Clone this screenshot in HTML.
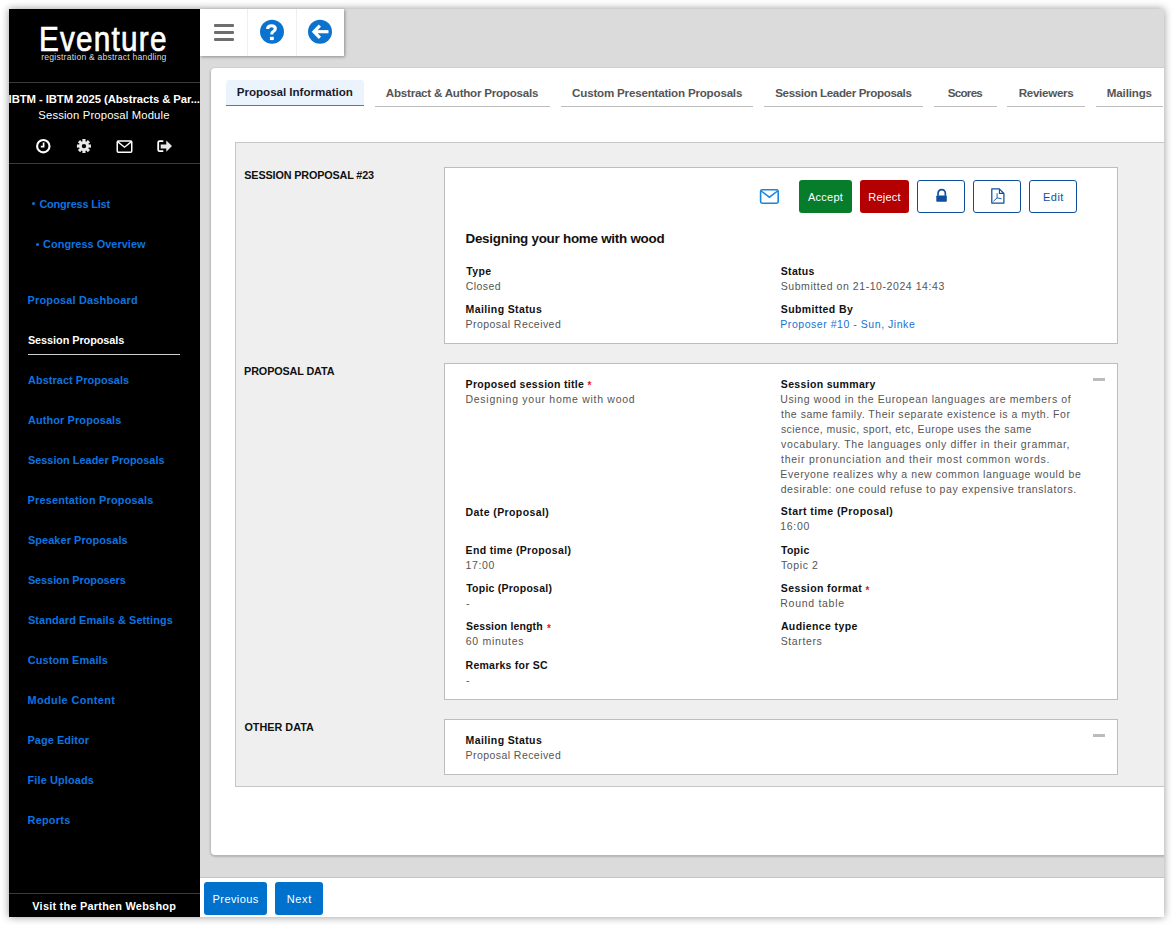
<!DOCTYPE html>
<html><head><meta charset="utf-8">
<style>
html,body{margin:0;padding:0;background:#fff;width:1172px;height:925px;overflow:hidden;font-family:"Liberation Sans",sans-serif}
.a{position:absolute}
.t{position:absolute;white-space:nowrap;font-family:"Liberation Sans",sans-serif}
#shadow{position:absolute;left:9px;top:9px;width:1155px;height:908px;box-shadow:0 0 8px 0 rgba(0,0,0,.42)}
#clip{position:absolute;left:0;top:0;width:1164px;height:917px;overflow:hidden}
.ul{position:absolute;height:1px;background:#bdbdbd;top:106px}
.obtn{position:absolute;top:180px;width:48px;height:33px;box-sizing:border-box;border:1.5px solid #0f4f9a;border-radius:3px;background:#fff}
.box{position:absolute;left:444px;width:674px;box-sizing:border-box;border:1px solid #bdbdbd;background:#fff}
.dash{position:absolute;left:1093px;width:12px;height:3px;background:#bcbcbc}
.ast{position:absolute;color:#e4161b;font:bold 10px/10px "Liberation Sans",sans-serif}
</style></head><body>
<div id="shadow"></div>
<div id="clip">
  <!-- sidebar -->
  <div class="a" style="left:9px;top:9px;width:191px;height:908px;background:#000"></div>
  <div class="a" style="left:9px;top:82px;width:191px;height:1px;background:#3a3a3a"></div>
  <div class="a" style="left:9px;top:163px;width:191px;height:1px;background:#3a3a3a"></div>
  <div class="a" style="left:9px;top:893px;width:191px;height:1px;background:#3a3a3a"></div>
  <div class="a" style="left:28px;top:354px;width:152px;height:1px;background:#cfcfcf"></div>
  <div class="a" style="left:32px;top:202.3px;width:3px;height:3px;border-radius:50%;background:#0c74e0"></div>
  <div class="a" style="left:36.1px;top:242.5px;width:3px;height:3px;border-radius:50%;background:#0c74e0"></div>
  
  <!-- sidebar icons -->
  <svg class="a" style="left:35px;top:138px" width="17" height="17" viewBox="0 0 17 17">
    <circle cx="8.3" cy="8.15" r="6.2" fill="none" stroke="#fff" stroke-width="2.1"/>
    <path d="M8.6 4.4V8.7H5.8" fill="none" stroke="#fff" stroke-width="1.7"/>
  </svg>
  <svg class="a" style="left:76px;top:138px" width="16" height="16" viewBox="0 0 16 16">
    <path fill="#e8e8e8" fill-rule="evenodd" d="M12.73 6.62 L14.96 6.46 L14.96 9.74 L12.73 9.58 L12.37 10.43 L14.07 11.90 L11.75 14.22 L10.28 12.52 L9.43 12.88 L9.59 15.11 L6.31 15.11 L6.47 12.88 L5.62 12.52 L4.15 14.22 L1.83 11.90 L3.53 10.43 L3.17 9.58 L0.94 9.74 L0.94 6.46 L3.17 6.62 L3.53 5.77 L1.83 4.30 L4.15 1.98 L5.62 3.68 L6.47 3.32 L6.31 1.09 L9.59 1.09 L9.43 3.32 L10.28 3.68 L11.75 1.98 L14.07 4.30 L12.37 5.77ZM10.15 8.1 A2.2 2.2 0 1 0 5.75 8.1 A2.2 2.2 0 1 0 10.15 8.1Z"/>
  </svg>
  <svg class="a" style="left:115px;top:139px" width="19" height="16" viewBox="0 0 19 16">
    <rect x="2.25" y="1.95" width="14.5" height="11.2" rx="1.1" fill="none" stroke="#fff" stroke-width="1.5"/>
    <path d="M2.6 2.6L9.5 8.2L16.4 2.6" fill="none" stroke="#fff" stroke-width="1.4"/>
  </svg>
  <svg class="a" style="left:156px;top:138px" width="17" height="16" viewBox="0 0 17 16">
    <path d="M7.3 3.1H3.6Q2.2 3.1 2.2 4.5V11.7Q2.2 13.1 3.6 13.1H7.3" fill="none" stroke="#fff" stroke-width="1.8"/>
    <path fill="#e8e8e8" d="M4.7 6.4H10.3V2.5L16 8.1L10.3 13.7V10.4H4.7Z"/>
  </svg>

  <!-- main -->
  <div class="a" style="left:200px;top:9px;width:964px;height:868px;background:#dbdbdb"></div>
  <div class="a" style="left:200px;top:877px;width:964px;height:1px;background:#c4c4c4"></div>
  <div class="a" style="left:200px;top:878px;width:964px;height:39px;background:#fff"></div>
  <div class="a" style="left:204px;top:882px;width:63px;height:33px;background:#0072ce;border-radius:3px"></div>
  <div class="a" style="left:275px;top:882px;width:48px;height:33px;background:#0072ce;border-radius:3px"></div>

  <!-- toolbar -->
  <div class="a" style="left:200px;top:9px;width:144px;height:47px;background:#fff;box-shadow:1px 1px 3px rgba(0,0,0,.35)"></div>
  <div class="a" style="left:247px;top:9px;width:1px;height:47px;background:#efefef"></div>
  <div class="a" style="left:296px;top:9px;width:1px;height:47px;background:#efefef"></div>
  <div class="a" style="left:214px;top:24px;width:20px;height:3px;background:#6e6e6e;border-radius:1px"></div>
  <div class="a" style="left:214px;top:31px;width:20px;height:3px;background:#6e6e6e;border-radius:1px"></div>
  <div class="a" style="left:214px;top:38px;width:20px;height:3px;background:#6e6e6e;border-radius:1px"></div>
  <svg class="a" style="left:259px;top:19px" width="26" height="26" viewBox="0 0 26 26">
    <circle cx="13" cy="12.7" r="12" fill="#0a72cf"/>
    <path d="M8.6 10.1Q8.6 6.7 12.5 6.7Q16.3 6.7 16.3 9.8Q16.3 11.7 14.2 12.7Q12.8 13.4 12.8 14.7V15.6" fill="none" stroke="#fff" stroke-width="3.1"/>
    <rect x="10.9" y="17.8" width="3.9" height="3.3" fill="#fff"/>
  </svg>
  <svg class="a" style="left:307px;top:19px" width="26" height="26" viewBox="0 0 26 26">
    <circle cx="13" cy="12.7" r="12" fill="#0a72cf"/>
    <path d="M12.9 6.6L7 12.7L12.9 18.8" fill="none" stroke="#fff" stroke-width="3.2" stroke-linejoin="miter" stroke-miterlimit="3"/>
    <path d="M8 12.7H21.5" fill="none" stroke="#fff" stroke-width="3.2"/>
  </svg>

  <!-- card -->
  <div class="a" style="left:211px;top:68px;width:1000px;height:787px;background:#fff;border-radius:4px;box-shadow:0 1px 2px 1px rgba(0,0,0,.18)"></div>
  <div class="a" style="left:226px;top:80px;width:138px;height:25px;background:#ebf4fc;border-radius:3px 3px 0 0"></div>
  <div class="a" style="left:226px;top:105px;width:138px;height:1px;background:#1e88e5"></div>
  <div class="ul" style="left:375px;width:175px"></div>
  <div class="ul" style="left:561px;width:192px"></div>
  <div class="ul" style="left:764px;width:159px"></div>
  <div class="ul" style="left:934px;width:63px"></div>
  <div class="ul" style="left:1007px;width:78px"></div>
  <div class="ul" style="left:1096px;width:67px"></div>

  <!-- panel -->
  <div class="a" style="left:235px;top:142px;width:1000px;height:645px;box-sizing:border-box;border:1px solid #c6c6c6;background:#efefef"></div>
  <div class="box" style="top:167px;height:177px"></div>
  <div class="box" style="top:363px;height:337px"></div>
  <div class="box" style="top:719px;height:56px"></div>
  <div class="dash" style="top:378px"></div>
  <div class="dash" style="top:734px"></div>

  <!-- buttons -->
  <svg class="a" style="left:759px;top:188px" width="21" height="17" viewBox="0 0 21 17">
    <rect x="1.6" y="1.8" width="17.6" height="13.4" rx="1.6" fill="none" stroke="#1a84e0" stroke-width="1.6"/>
    <path d="M2.2 3L10.4 9.2L18.6 3" fill="none" stroke="#1a84e0" stroke-width="1.5"/>
  </svg>
  <div class="a" style="left:799px;top:180px;width:53px;height:33px;background:#077d2c;border-radius:3px"></div>
  <div class="a" style="left:860px;top:180px;width:49px;height:33px;background:#b40000;border-radius:3px"></div>
  <div class="obtn" style="left:917px"></div>
  <div class="obtn" style="left:973px"></div>
  <div class="obtn" style="left:1029px"></div>
  <svg class="a" style="left:935px;top:188px" width="13" height="15" viewBox="0 0 13 15">
    <path d="M3.05 7.8V5.2A3.65 3.65 0 0 1 10.35 5.2V7.8" fill="none" stroke="#0d4f9c" stroke-width="1.7"/>
    <rect x="1.3" y="7.4" width="10.5" height="6.4" rx="0.8" fill="#0d4f9c"/>
  </svg>
  <svg class="a" style="left:990px;top:187px" width="16" height="18" viewBox="0 0 16 18">
    <path d="M1.8 1.9H9.3L13.9 6.5V16H1.8Z" fill="none" stroke="#0d4f9c" stroke-width="1.25" stroke-linejoin="round"/>
    <path d="M9.4 2V6.4H13.8" fill="none" stroke="#0d4f9c" stroke-width="1.1"/>
    <path d="M7.1 6.2V10.9L3.4 14.3M7.1 10.9L11.6 11.8" fill="none" stroke="#0d4f9c" stroke-width="0.9"/>
  </svg>
  <div class="ast" style="left:587.5px;top:380.5px">*</div>
  <div class="ast" style="left:547px;top:624px">*</div>
  <div class="ast" style="left:865.5px;top:585.5px">*</div>

<div class=t style="left:39.48px;top:22px;font-size:34.5px;line-height:34.5px;font-weight:normal;color:#fff;letter-spacing:1.440px;-webkit-text-stroke:0.7px #fff;transform:scaleX(0.86);transform-origin:0 0;">Eventure</div>
<div class=t style="left:41.30px;top:53px;font-size:8.6px;line-height:8.6px;font-weight:normal;color:#d8d8d8;letter-spacing:0.214px;">registration &amp; abstract handling</div>
<div class=t style="left:8.60px;top:94px;font-size:11.3px;line-height:11.3px;font-weight:bold;color:#fff;letter-spacing:-0.074px;">IBTM - IBTM 2025 (Abstracts &amp; Par...</div>
<div class=t style="left:38.30px;top:110px;font-size:11.3px;line-height:11.3px;font-weight:normal;color:#fff;letter-spacing:0.138px;">Session Proposal Module</div>
<div class=t style="left:39.40px;top:199px;font-size:10.9px;line-height:10.9px;font-weight:bold;color:#0c74e0;letter-spacing:-0.163px;">Congress List</div>
<div class=t style="left:43.10px;top:239px;font-size:10.9px;line-height:10.9px;font-weight:bold;color:#0c74e0;letter-spacing:0.044px;">Congress Overview</div>
<div class=t style="left:27.50px;top:295px;font-size:10.9px;line-height:10.9px;font-weight:bold;color:#0c74e0;letter-spacing:0.209px;">Proposal Dashboard</div>
<div class=t style="left:27.90px;top:335px;font-size:10.9px;line-height:10.9px;font-weight:bold;color:#fff;letter-spacing:-0.061px;">Session Proposals</div>
<div class=t style="left:28.00px;top:375px;font-size:10.9px;line-height:10.9px;font-weight:bold;color:#0c74e0;letter-spacing:0.071px;">Abstract Proposals</div>
<div class=t style="left:28.00px;top:415px;font-size:10.9px;line-height:10.9px;font-weight:bold;color:#0c74e0;letter-spacing:0.128px;">Author Proposals</div>
<div class=t style="left:27.90px;top:455px;font-size:10.9px;line-height:10.9px;font-weight:bold;color:#0c74e0;letter-spacing:0.020px;">Session Leader Proposals</div>
<div class=t style="left:27.50px;top:495px;font-size:10.9px;line-height:10.9px;font-weight:bold;color:#0c74e0;letter-spacing:0.196px;">Presentation Proposals</div>
<div class=t style="left:27.90px;top:535px;font-size:10.9px;line-height:10.9px;font-weight:bold;color:#0c74e0;letter-spacing:0.101px;">Speaker Proposals</div>
<div class=t style="left:27.90px;top:575px;font-size:10.9px;line-height:10.9px;font-weight:bold;color:#0c74e0;letter-spacing:-0.049px;">Session Proposers</div>
<div class=t style="left:27.90px;top:615px;font-size:10.9px;line-height:10.9px;font-weight:bold;color:#0c74e0;letter-spacing:0.105px;">Standard Emails &amp; Settings</div>
<div class=t style="left:27.80px;top:655px;font-size:10.9px;line-height:10.9px;font-weight:bold;color:#0c74e0;letter-spacing:0.102px;">Custom Emails</div>
<div class=t style="left:27.50px;top:695px;font-size:10.9px;line-height:10.9px;font-weight:bold;color:#0c74e0;letter-spacing:0.399px;">Module Content</div>
<div class=t style="left:27.50px;top:735px;font-size:10.9px;line-height:10.9px;font-weight:bold;color:#0c74e0;letter-spacing:0.087px;">Page Editor</div>
<div class=t style="left:27.50px;top:775px;font-size:10.9px;line-height:10.9px;font-weight:bold;color:#0c74e0;letter-spacing:0.151px;">File Uploads</div>
<div class=t style="left:27.50px;top:815px;font-size:10.9px;line-height:10.9px;font-weight:bold;color:#0c74e0;letter-spacing:0.263px;">Reports</div>
<div class=t style="left:32.30px;top:901px;font-size:10.9px;line-height:10.9px;font-weight:bold;color:#fff;letter-spacing:0.249px;">Visit the Parthen Webshop</div>
<div class=t style="left:236.80px;top:86px;font-size:11.6px;line-height:11.6px;font-weight:bold;color:#1b1b2a;letter-spacing:-0.030px;">Proposal Information</div>
<div class=t style="left:385.80px;top:87px;font-size:11.6px;line-height:11.6px;font-weight:bold;color:#555;letter-spacing:-0.233px;">Abstract &amp; Author Proposals</div>
<div class=t style="left:572.10px;top:87px;font-size:11.6px;line-height:11.6px;font-weight:bold;color:#555;letter-spacing:-0.201px;">Custom Presentation Proposals</div>
<div class=t style="left:775.20px;top:87px;font-size:11.6px;line-height:11.6px;font-weight:bold;color:#555;letter-spacing:-0.361px;">Session Leader Proposals</div>
<div class=t style="left:947.70px;top:87px;font-size:11.6px;line-height:11.6px;font-weight:bold;color:#555;letter-spacing:-0.708px;">Scores</div>
<div class=t style="left:1018.70px;top:87px;font-size:11.6px;line-height:11.6px;font-weight:bold;color:#555;letter-spacing:-0.293px;">Reviewers</div>
<div class=t style="left:1106.80px;top:87px;font-size:11.6px;line-height:11.6px;font-weight:bold;color:#555;letter-spacing:-0.165px;">Mailings</div>
<div class=t style="left:244.30px;top:170px;font-size:10.8px;line-height:10.8px;font-weight:bold;color:#111;letter-spacing:-0.139px;">SESSION PROPOSAL #23</div>
<div class=t style="left:244.10px;top:366px;font-size:10.8px;line-height:10.8px;font-weight:bold;color:#111;letter-spacing:-0.117px;">PROPOSAL DATA</div>
<div class=t style="left:244.40px;top:722px;font-size:10.8px;line-height:10.8px;font-weight:bold;color:#111;letter-spacing:0.023px;">OTHER DATA</div>
<div class=t style="left:465.50px;top:232px;font-size:13.4px;line-height:13.4px;font-weight:bold;color:#111;letter-spacing:-0.247px;">Designing your home with wood</div>
<div class=t style="left:466.20px;top:266px;font-size:10.5px;line-height:10.5px;font-weight:bold;color:#111;letter-spacing:0.371px;">Type</div>
<div class=t style="left:465.80px;top:281px;font-size:10.5px;line-height:10.5px;font-weight:normal;color:#555;letter-spacing:0.431px;">Closed</div>
<div class=t style="left:465.60px;top:304px;font-size:10.5px;line-height:10.5px;font-weight:bold;color:#111;letter-spacing:0.382px;">Mailing Status</div>
<div class=t style="left:465.50px;top:319px;font-size:10.5px;line-height:10.5px;font-weight:normal;color:#555;letter-spacing:0.444px;">Proposal Received</div>
<div class=t style="left:780.80px;top:266px;font-size:10.5px;line-height:10.5px;font-weight:bold;color:#111;letter-spacing:0.310px;">Status</div>
<div class=t style="left:780.70px;top:281px;font-size:10.5px;line-height:10.5px;font-weight:normal;color:#555;letter-spacing:0.566px;">Submitted on 21-10-2024 14:43</div>
<div class=t style="left:780.80px;top:304px;font-size:10.5px;line-height:10.5px;font-weight:bold;color:#111;letter-spacing:0.388px;">Submitted By</div>
<div class=t style="left:780.30px;top:319px;font-size:10.5px;line-height:10.5px;font-weight:normal;color:#1672cf;letter-spacing:0.543px;">Proposer #10 - Sun, Jinke</div>
<div class=t style="left:465.60px;top:379px;font-size:10.5px;line-height:10.5px;font-weight:bold;color:#111;letter-spacing:0.296px;">Proposed session title</div>
<div class=t style="left:465.50px;top:394px;font-size:10.5px;line-height:10.5px;font-weight:normal;color:#555;letter-spacing:0.725px;">Designing your home with wood</div>
<div class=t style="left:465.60px;top:507px;font-size:10.5px;line-height:10.5px;font-weight:bold;color:#111;letter-spacing:0.400px;">Date (Proposal)</div>
<div class=t style="left:465.60px;top:545px;font-size:10.5px;line-height:10.5px;font-weight:bold;color:#111;letter-spacing:0.340px;">End time (Proposal)</div>
<div class=t style="left:465.50px;top:560px;font-size:10.5px;line-height:10.5px;font-weight:normal;color:#555;letter-spacing:0.616px;">17:00</div>
<div class=t style="left:466.20px;top:583px;font-size:10.5px;line-height:10.5px;font-weight:bold;color:#111;letter-spacing:0.243px;">Topic (Proposal)</div>
<div class=t style="left:465.90px;top:598px;font-size:10.5px;line-height:10.5px;font-weight:normal;color:#555;letter-spacing:0.600px;">-</div>
<div class=t style="left:466.00px;top:621px;font-size:10.5px;line-height:10.5px;font-weight:bold;color:#111;letter-spacing:0.149px;">Session length</div>
<div class=t style="left:465.80px;top:636px;font-size:10.5px;line-height:10.5px;font-weight:normal;color:#555;letter-spacing:0.710px;">60 minutes</div>
<div class=t style="left:465.60px;top:660px;font-size:10.5px;line-height:10.5px;font-weight:bold;color:#111;letter-spacing:0.246px;">Remarks for SC</div>
<div class=t style="left:465.90px;top:675px;font-size:10.5px;line-height:10.5px;font-weight:normal;color:#555;letter-spacing:0.600px;">-</div>
<div class=t style="left:780.80px;top:379px;font-size:10.5px;line-height:10.5px;font-weight:bold;color:#111;letter-spacing:0.333px;">Session summary</div>
<div class=t style="left:780.30px;top:394px;font-size:10.5px;line-height:10.5px;font-weight:normal;color:#555;letter-spacing:0.612px;">Using wood in the European languages are members of</div>
<div class=t style="left:781.00px;top:409px;font-size:10.5px;line-height:10.5px;font-weight:normal;color:#555;letter-spacing:0.528px;">the same family. Their separate existence is a myth. For</div>
<div class=t style="left:780.90px;top:424px;font-size:10.5px;line-height:10.5px;font-weight:normal;color:#555;letter-spacing:0.459px;">science, music, sport, etc, Europe uses the same</div>
<div class=t style="left:781.10px;top:439px;font-size:10.5px;line-height:10.5px;font-weight:normal;color:#555;letter-spacing:0.618px;">vocabulary. The languages only differ in their grammar,</div>
<div class=t style="left:781.00px;top:454px;font-size:10.5px;line-height:10.5px;font-weight:normal;color:#555;letter-spacing:0.757px;">their pronunciation and their most common words.</div>
<div class=t style="left:780.30px;top:469px;font-size:10.5px;line-height:10.5px;font-weight:normal;color:#555;letter-spacing:0.592px;">Everyone realizes why a new common language would be</div>
<div class=t style="left:780.70px;top:484px;font-size:10.5px;line-height:10.5px;font-weight:normal;color:#555;letter-spacing:0.587px;">desirable: one could refuse to pay expensive translators.</div>
<div class=t style="left:780.80px;top:506px;font-size:10.5px;line-height:10.5px;font-weight:bold;color:#111;letter-spacing:0.436px;">Start time (Proposal)</div>
<div class=t style="left:780.30px;top:521px;font-size:10.5px;line-height:10.5px;font-weight:normal;color:#555;letter-spacing:0.691px;">16:00</div>
<div class=t style="left:781.00px;top:545px;font-size:10.5px;line-height:10.5px;font-weight:bold;color:#111;letter-spacing:0.255px;">Topic</div>
<div class=t style="left:780.90px;top:560px;font-size:10.5px;line-height:10.5px;font-weight:normal;color:#555;letter-spacing:0.628px;">Topic 2</div>
<div class=t style="left:780.80px;top:583px;font-size:10.5px;line-height:10.5px;font-weight:bold;color:#111;letter-spacing:0.388px;">Session format</div>
<div class=t style="left:780.30px;top:598px;font-size:10.5px;line-height:10.5px;font-weight:normal;color:#555;letter-spacing:0.711px;">Round table</div>
<div class=t style="left:780.90px;top:621px;font-size:10.5px;line-height:10.5px;font-weight:bold;color:#111;letter-spacing:0.389px;">Audience type</div>
<div class=t style="left:780.70px;top:636px;font-size:10.5px;line-height:10.5px;font-weight:normal;color:#555;letter-spacing:0.613px;">Starters</div>
<div class=t style="left:465.60px;top:735px;font-size:10.5px;line-height:10.5px;font-weight:bold;color:#111;letter-spacing:0.382px;">Mailing Status</div>
<div class=t style="left:465.50px;top:750px;font-size:10.5px;line-height:10.5px;font-weight:normal;color:#555;letter-spacing:0.444px;">Proposal Received</div>
<div class=t style="left:808.00px;top:192px;font-size:11px;line-height:11px;font-weight:normal;color:#fff;letter-spacing:0.246px;">Accept</div>
<div class=t style="left:868.30px;top:192px;font-size:11px;line-height:11px;font-weight:normal;color:#fff;letter-spacing:0.195px;">Reject</div>
<div class=t style="left:1043.10px;top:192px;font-size:11px;line-height:11px;font-weight:normal;color:#0d4f9c;letter-spacing:0.434px;">Edit</div>
<div class=t style="left:212.60px;top:894px;font-size:11px;line-height:11px;font-weight:normal;color:#fff;letter-spacing:0.415px;">Previous</div>
<div class=t style="left:286.70px;top:894px;font-size:11px;line-height:11px;font-weight:normal;color:#fff;letter-spacing:0.679px;">Next</div>
</div>
</body></html>
